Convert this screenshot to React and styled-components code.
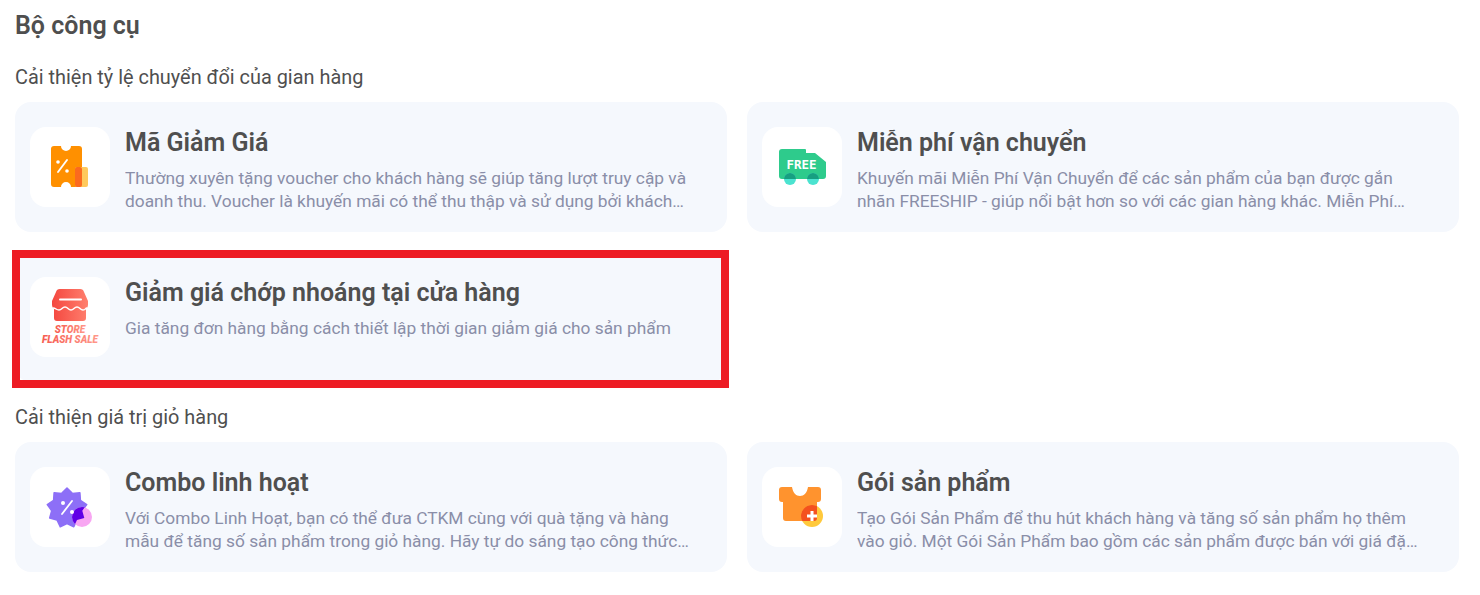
import styled, { createGlobalStyle } from "styled-components";

const GlobalStyle = createGlobalStyle`
  html, body {
    margin: 0;
    padding: 0;
    background: #fff;
    font-family: Roboto, "Liberation Sans", sans-serif;
  }
`;

const Page = styled.main`
  box-sizing: border-box;
  width: 1480px;
  height: 595px;
  padding: 9px 21px 0 15px;
  overflow: hidden;
`;

const Heading = styled.h1`
  margin: 0 0 23px;
  font-size: 25px;
  line-height: 34px;
  font-weight: 600;
  color: #4f4f4f;
`;

const SectionLabel = styled.h2`
  margin: 0 0 12px;
  font-size: 19.9px;
  line-height: 24px;
  font-weight: 400;
  color: #4f4f4f;
`;

const Grid = styled.div`
  display: grid;
  grid-template-columns: 712px 712px;
  gap: 20px;
  margin-bottom: 24px;
`;

const Card = styled.article`
  position: relative;
  box-sizing: border-box;
  height: 130px;
  padding: 25px 36px 25px 15px;
  display: flex;
  gap: 15px;
  background: #f5f8fd;
  border-radius: 16px;
`;

const Highlight = styled.div`
  position: absolute;
  top: -2px;
  left: -3px;
  right: -2px;
  bottom: -6px;
  border: 8px solid #ed1c24;
`;

const IconBox = styled.div`
  flex: none;
  width: 80px;
  height: 80px;
  background: #fff;
  border-radius: 16px;

  svg {
    display: block;
  }
`;

const CardBody = styled.div`
  min-width: 0;
  flex: 1;
`;

const CardTitle = styled.h3`
  margin: 0 0 8px;
  font-size: 25px;
  line-height: 32px;
  font-weight: 600;
  color: #4f4f4f;
  white-space: nowrap;
`;

const CardText = styled.p`
  margin: 0;
  font-size: 17.33px;
  line-height: 23px;
  color: #8a8ea8;
  display: -webkit-box;
  -webkit-box-orient: vertical;
  -webkit-line-clamp: 2;
  overflow: hidden;
`;

const VoucherIcon = () => (
  <svg width="80" height="80" viewBox="0 0 80 80">
    <path
      d="M24 19h7a5 5 0 0 0 10 0h8a3 3 0 0 1 3 3v35a3 3 0 0 1-3 3h-8a5 5 0 0 0-10 0h-7a3 3 0 0 1-3-3V22a3 3 0 0 1 3-3z"
      fill="#ff9000"
    />
    <rect x="45" y="40" width="13" height="20" rx="2" fill="#ffc95c" />
    <rect x="45" y="40" width="7" height="20" rx="2" fill="#fb6a1e" />
    <path d="M28 45l9-12" stroke="#fff" strokeWidth="1.800" strokeLinecap="round" />
    <circle cx="28" cy="35" r="1.800" fill="#fff" />
    <circle cx="37" cy="44" r="1.800" fill="#fff" />
  </svg>
);

const truckPath = "M20 22h23a1 1 0 0 1 1 1v3h9l11 9v14a3 3 0 0 1-3 3H20a3 3 0 0 1-3-3V25a3 3 0 0 1 3-3z";

const TruckIcon = () => (
  <svg width="80" height="80" viewBox="0 0 80 80">
    <defs>
      <clipPath id="truck-body">
        <path d={truckPath} />
      </clipPath>
    </defs>
    <path d={truckPath} fill="#2ecb8c" />
    <circle cx="28" cy="52" r="6" fill="#4be3d0" />
    <circle cx="51" cy="52" r="6" fill="#4be3d0" />
    <g clipPath="url(#truck-body)">
      <circle cx="28" cy="52" r="6" fill="#179f80" />
      <circle cx="51" cy="52" r="6" fill="#179f80" />
    </g>
    <text x="39.500" y="41.500" textAnchor="middle" fontFamily="DejaVu Sans Mono, monospace" fontWeight="700" fontSize="12.500" fill="#fff">
      FREE
    </text>
  </svg>
);

const StoreIcon = () => (
  <svg width="80" height="80" viewBox="0 0 80 80">
    <defs>
      <linearGradient id="store-fill" x1="0" y1="0" x2="1" y2="0">
        <stop offset="0" stopColor="#f4473f" />
        <stop offset="1" stopColor="#ff7f6e" />
      </linearGradient>
      <linearGradient id="store-text" x1="0" y1="0" x2="1" y2="0">
        <stop offset="0" stopColor="#f65a50" />
        <stop offset="1" stopColor="#ff9a8c" />
      </linearGradient>
    </defs>
    <path d="M30 12h20a4 4 0 0 1 4 3l4 9v4a5 5 0 0 1-2 4v9a3 3 0 0 1-3 3H27a3 3 0 0 1-3-3v-9a5 5 0 0 1-2-4v-4l4-9a4 4 0 0 1 4-3z" fill="url(#store-fill)" />
    <rect x="29" y="21.500" width="23" height="2" rx="1" fill="#fff" />
    <path d="M23 31c3 0 3 2 6 2s3-3 6-3 3 3 6 3 3-3 6-3 3 3 6 3 2-2 4-2" fill="none" stroke="#fff" strokeWidth="1.500" />
    <g fontFamily="Roboto, sans-serif" fontWeight="900" fontStyle="italic" textAnchor="middle" fill="url(#store-text)">
      <text x="40" y="56" fontSize="10">STORE</text>
      <text x="40" y="66" fontSize="10">FLASH SALE</text>
    </g>
  </svg>
);

const starPoints = Array.from({ length: 18 }, (_, i) => {
  const r = i % 2 === 0 ? 20 : 15.500;
  const a = (i * Math.PI) / 9 - Math.PI / 2;
  return `${(37 + r * Math.cos(a)).toFixed(1)},${(41 + r * Math.sin(a)).toFixed(1)}`;
}).join(" ");

const ComboIcon = () => (
  <svg width="80" height="80" viewBox="0 0 80 80">
    <defs>
      <clipPath id="combo-star">
        <polygon points={starPoints} />
      </clipPath>
    </defs>
    <polygon points={starPoints} fill="#8d6ff7" stroke="#8d6ff7" strokeWidth="1.500" strokeLinejoin="round" />
    <circle cx="52" cy="50" r="10" fill="#f8a6f2" />
    <circle cx="52" cy="50" r="10" fill="#6000e6" clipPath="url(#combo-star)" />
    <path d="M32 47l10-13" stroke="#fff" strokeWidth="1.800" strokeLinecap="round" />
    <circle cx="33" cy="36" r="2" fill="#fff" />
    <circle cx="42" cy="45" r="2" fill="#fff" />
  </svg>
);

const shirtPath = "M20 20h10c1 6 4 9 8 9s7-3 8-9h10a3 3 0 0 1 3 3v9a3 3 0 0 1-3 3h-1v16a3 3 0 0 1-3 3H24a3 3 0 0 1-3-3V35h-1a3 3 0 0 1-3-3v-9a3 3 0 0 1 3-3z";

const BundleIcon = () => (
  <svg width="80" height="80" viewBox="0 0 80 80">
    <defs>
      <clipPath id="bundle-shirt">
        <path d={shirtPath} />
      </clipPath>
    </defs>
    <path d={shirtPath} fill="#ff932e" />
    <circle cx="50" cy="49" r="11" fill="#ffc93c" />
    <circle cx="50" cy="49" r="11" fill="#f4511e" clipPath="url(#bundle-shirt)" />
    <path d="M50 44v10M45 49h10" stroke="#fff" strokeWidth="3" />
  </svg>
);

const sections = [
  {
    label: "Cải thiện tỷ lệ chuyển đổi của gian hàng",
    cards: [
      {
        title: "Mã Giảm Giá",
        text: "Thường xuyên tặng voucher cho khách hàng sẽ giúp tăng lượt truy cập và doanh thu. Voucher là khuyến mãi có thể thu thập và sử dụng bởi khách hàng khi mua sắm tại gian hàng của bạn.",
        icon: <VoucherIcon />,
      },
      {
        title: "Miễn phí vận chuyển",
        text: "Khuyến mãi Miễn Phí Vận Chuyển để các sản phẩm của bạn được gắn nhãn FREESHIP - giúp nổi bật hơn so với các gian hàng khác. Miễn Phí Vận Chuyển sẽ giúp tăng đơn hàng.",
        icon: <TruckIcon />,
      },
      {
        title: "Giảm giá chớp nhoáng tại cửa hàng",
        text: "Gia tăng đơn hàng bằng cách thiết lập thời gian giảm giá cho sản phẩm",
        icon: <StoreIcon />,
        highlighted: true,
      },
    ],
  },
  {
    label: "Cải thiện giá trị giỏ hàng",
    cards: [
      {
        title: "Combo linh hoạt",
        text: "Với Combo Linh Hoạt, bạn có thể đưa CTKM cùng với quà tặng và hàng mẫu để tăng số sản phẩm trong giỏ hàng. Hãy tự do sáng tạo công thức khuyến mãi cho riêng bạn nhé.",
        icon: <ComboIcon />,
      },
      {
        title: "Gói sản phẩm",
        text: "Tạo Gói Sản Phẩm để thu hút khách hàng và tăng số sản phẩm họ thêm vào giỏ. Một Gói Sản Phẩm bao gồm các sản phẩm được bán với giá đặc biệt khi mua cùng nhau.",
        icon: <BundleIcon />,
      },
    ],
  },
];

export default function App() {
  return (
    <Page>
      <GlobalStyle />
      <Heading>Bộ công cụ</Heading>
      {sections.map(({ label, cards }) => (
        <section key={label}>
          <SectionLabel>{label}</SectionLabel>
          <Grid>
            {cards.map(({ title, text, icon, highlighted }) => (
              <Card key={title}>
                <IconBox>{icon}</IconBox>
                <CardBody>
                  <CardTitle>{title}</CardTitle>
                  <CardText>{text}</CardText>
                </CardBody>
                {highlighted && <Highlight />}
              </Card>
            ))}
          </Grid>
        </section>
      ))}
    </Page>
  );
}
